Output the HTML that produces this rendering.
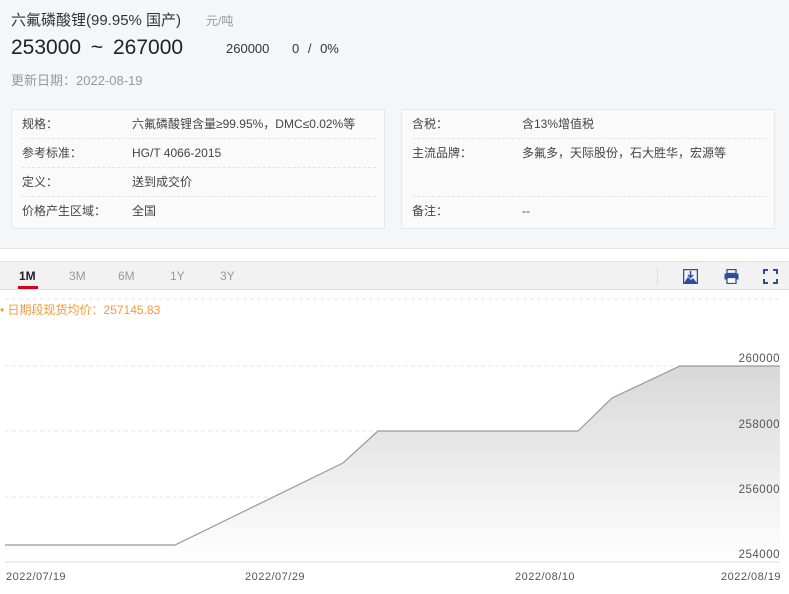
<!DOCTYPE html>
<html><head><meta charset="utf-8"><style>
*{margin:0;padding:0;box-sizing:border-box}
body{width:789px;height:594px;overflow:hidden;background:#fff;font-family:"Liberation Sans","Noto Sans CJK SC",sans-serif;color:#333;position:relative}
.top{position:absolute;left:0;top:0;width:789px;height:249px;background:#f5f6f8;border-bottom:1px solid #e6e6e6}
.a{position:absolute;white-space:nowrap}
.panel{position:absolute;top:109px;height:120px;background:#fafafa;border:1px solid #e8e8e8}
.row{position:absolute;left:10px;right:8px;height:29px;border-bottom:1px dashed #e2e2e2;font-size:12px;line-height:29px;color:#444}
.row span{position:absolute;left:110px}
.bar{position:absolute;left:0;top:261px;width:789px;height:29px;background:#f2f2f2;border-top:1px solid #e0e0e0;border-bottom:1px solid #e0e0e0}
.tab{position:absolute;top:7px;font-size:12px;color:#999}
.yl{position:absolute;right:9px;font-size:11.5px;color:#555;letter-spacing:.5px}
.xl{position:absolute;top:571px;font-size:11px;color:#555;letter-spacing:.5px}
</style></head><body>
<div class="top"></div>
<div class="a" style="left:11px;top:9px;font-size:15px;color:#333">六氟磷酸锂(99.95% 国产)</div>
<div class="a" style="left:206px;top:12px;font-size:12px;color:#999">元/吨</div>
<div class="a" style="left:11px;top:36px;font-size:21px;color:#222;word-spacing:4px">253000 ~ 267000</div>
<div class="a" style="left:226px;top:41px;font-size:13px;color:#333">260000</div>
<div class="a" style="left:292px;top:41px;font-size:13px;color:#333;word-spacing:5px">0 / 0%</div>
<div class="a" style="left:11px;top:70px;font-size:13px;color:#999">更新日期：2022-08-19</div>

<div class="panel" style="left:11px;width:374px">
<div class="row" style="top:0">规格：<span>六氟磷酸锂含量≥99.95%，DMC≤0.02%等</span></div>
<div class="row" style="top:29px">参考标准：<span>HG/T 4066-2015</span></div>
<div class="row" style="top:58px">定义：<span>送到成交价</span></div>
<div class="row" style="top:87px;border:none">价格产生区域：<span>全国</span></div>
</div>
<div class="panel" style="left:401px;width:374px">
<div class="row" style="top:0">含税：<span>含13%增值税</span></div>
<div class="row" style="top:29px;height:58px">主流品牌：<span>多氟多，天际股份，石大胜华，宏源等</span></div>
<div class="row" style="top:87px;border:none">备注：<span>--</span></div>
</div>

<div class="bar">
<div class="tab" style="left:19px;color:#222;font-weight:bold">1M</div>
<div style="position:absolute;left:18px;top:24px;width:20px;height:3px;background:#d9001b"></div>
<div class="tab" style="left:69px">3M</div>
<div class="tab" style="left:118px">6M</div>
<div class="tab" style="left:170px">1Y</div>
<div class="tab" style="left:220px">3Y</div>
<div style="position:absolute;left:657px;top:6px;width:1px;height:17px;background:#ddd"></div>
<svg style="position:absolute;left:683px;top:7px" width="15" height="15" viewBox="0 0 15 15"><rect x="0.5" y="0.5" width="14" height="14" fill="none" stroke="#2d4e9a" stroke-width="1.5"/><path d="M1 14 L5 8 L8 11 L10 9 L14 14Z" fill="#2d4e9a"/><path d="M7.5 2v6M5 6l2.5 2.5L10 6" stroke="#2d4e9a" stroke-width="1.5" fill="none"/></svg>
<svg style="position:absolute;left:724px;top:7px" width="15" height="15" viewBox="0 0 15 15"><rect x="3" y="0.5" width="9" height="4" fill="none" stroke="#2d4e9a" stroke-width="1.3"/><rect x="0.5" y="4.5" width="14" height="6" fill="#2d4e9a"/><rect x="3" y="8.5" width="9" height="6" fill="#fff" stroke="#2d4e9a" stroke-width="1.3"/></svg>
<svg style="position:absolute;left:763px;top:7px" width="15" height="15" viewBox="0 0 15 15" fill="none" stroke="#2d4e9a" stroke-width="2"><path d="M1 5V1h4M10 1h4v4M14 10v4h-4M5 14H1v-4"/></svg>
</div>

<div class="a" style="left:0;top:301px;font-size:12px;color:#f39a3b">• 日期段现货均价：257145.83</div>

<svg style="position:absolute;left:0;top:290px" width="789" height="304">
<defs><linearGradient id="g" x1="0" y1="0" x2="0" y2="1"><stop offset="0" stop-color="#d8d8d8"/><stop offset="1" stop-color="#fff"/></linearGradient></defs>
<g stroke="#e6e6e6" stroke-dasharray="4,3"><line x1="5" y1="9" x2="780" y2="9"/><line x1="5" y1="76" x2="780" y2="76"/><line x1="5" y1="141" x2="780" y2="141"/><line x1="5" y1="207" x2="780" y2="207"/></g>
<path d="M5 255 L175 255 L343 173 L378 141 L578 141 L612 108 L680 76 L780 76 L780 272 L5 272Z" fill="url(#g)"/>
<path d="M5 255 L175 255 L343 173 L378 141 L578 141 L612 108 L680 76 L780 76" fill="none" stroke="#999" stroke-width="1.2"/>
<line x1="5" y1="272" x2="780" y2="272" stroke="#ddd"/>
</svg>
<div class="yl" style="top:353px">260000</div>
<div class="yl" style="top:419px">258000</div>
<div class="yl" style="top:484px">256000</div>
<div class="yl" style="top:549px">254000</div>
<div class="xl" style="left:6px">2022/07/19</div>
<div class="xl" style="left:245px">2022/07/29</div>
<div class="xl" style="left:515px">2022/08/10</div>
<div class="xl" style="left:721px">2022/08/19</div>
</body></html>
